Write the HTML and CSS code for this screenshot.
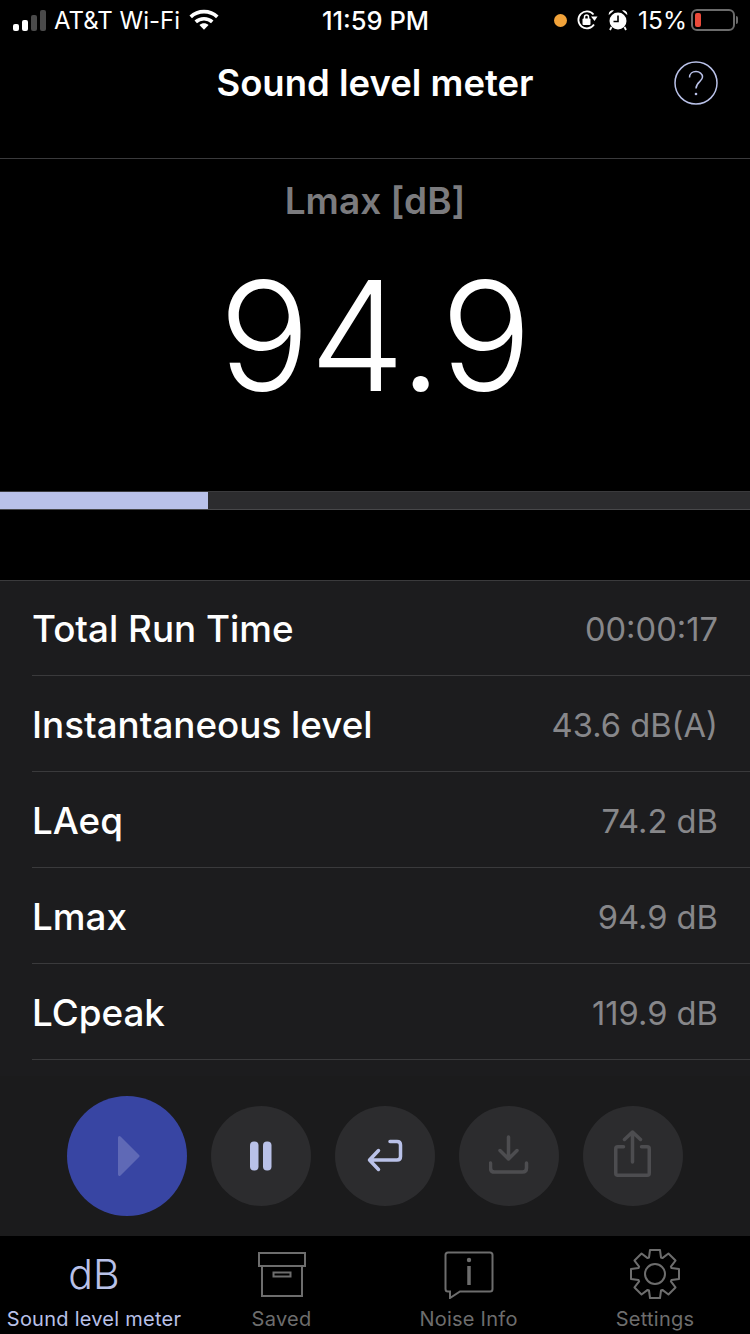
FILE: index.html
```html
<!DOCTYPE html>
<html lang="en">
<head>
    <meta charset="UTF-8">
    <meta name="viewport" content="width=device-width, initial-scale=1.0">
    <title>Sound level meter</title>
    <link rel="stylesheet" href="styles.css">
</head>
<body>
    <div class="status-bar">
        <div class="status-left">
            <div class="signal">
                <span class="on s1"></span><span class="on s2"></span><span class="s3"></span><span class="s4"></span>
            </div>
            <span class="carrier">AT&amp;T Wi-Fi</span>
            <svg class="wifi" width="30" height="22" viewBox="0 0 32 24">
                <path d="M1.5 8.5C9.5 1 22.500 1 30.500 8.500" fill="none" stroke="#fff" stroke-width="4"/>
                <path d="M7 14C12 9.500 20 9.500 25 14" fill="none" stroke="#fff" stroke-width="4"/>
                <path d="M11 17.500C14 15 18 15 21 17.500L16 22.500Z" fill="#fff"/>
            </svg>
        </div>
        <div class="clock">11:59 PM</div>
        <div class="status-right">
            <span class="mic-dot"></span>
            <svg width="22" height="22" viewBox="0 0 22 22">
                <path d="M18 15.500A8.500 8.500 0 1 1 17.500 5.500" fill="none" stroke="#fff" stroke-width="1.800"/>
                <path d="M15 7.500L21.500 7.500L18.500 12Z" fill="#fff"/>
                <rect x="6.500" y="9.500" width="8" height="6.500" rx="1" fill="#fff"/>
                <path d="M8.500 10V8a2 2 0 0 1 4 0v2" fill="none" stroke="#fff" stroke-width="1.500"/>
            </svg>
            <svg class="alarm" width="20" height="22" viewBox="0 0 20 22">
                <circle cx="10" cy="12" r="8.500" fill="#fff"/>
                <path d="M0.800 6A4 4 0 0 1 6 1.500ZM19.200 6A4 4 0 0 0 14 1.500Z" fill="#fff"/>
                <path d="M10 6.500V12.500H5.500" fill="none" stroke="#000" stroke-width="1.600"/>
                <path d="M3.500 18L2 21M16.500 18L18 21" stroke="#fff" stroke-width="1.800"/>
            </svg>
            <span class="percent">15%</span>
            <div class="battery"><span class="battery-level"></span></div>
            <span class="battery-cap"></span>
        </div>
    </div>

    <div class="nav-bar">
        <h1 class="nav-title">Sound level meter</h1>
        <svg class="help" width="44" height="44" viewBox="0 0 44 44">
            <circle cx="22" cy="22" r="21" fill="none" stroke="#b9c1e8" stroke-width="1.500"/>
            <path d="M15.500 16.500C15.500 12.500 18.500 10.500 22 10.500C25.500 10.500 28.500 12.800 28.500 16C28.500 20.500 22 21 22 27.500" fill="none" stroke="#b9c1e8" stroke-width="1.500"/>
            <circle cx="22" cy="33" r="1.300" fill="#b9c1e8"/>
        </svg>
    </div>

    <div class="meter">
        <div class="meter-label">Lmax [dB]</div>
        <div class="meter-value">94.9</div>
    </div>

    <div class="progress"><div class="progress-fill"></div></div>

    <div class="stats">
        <div class="stat-row"><span class="stat-name">Total Run Time</span><span class="stat-value">00:00:17</span></div>
        <div class="stat-row"><span class="stat-name">Instantaneous level</span><span class="stat-value">43.6 dB(A)</span></div>
        <div class="stat-row"><span class="stat-name">LAeq</span><span class="stat-value">74.2 dB</span></div>
        <div class="stat-row"><span class="stat-name">Lmax</span><span class="stat-value">94.9 dB</span></div>
        <div class="stat-row"><span class="stat-name">LCpeak</span><span class="stat-value">119.9 dB</span></div>
    </div>

    <div class="controls">
        <button class="round-btn play">
            <svg class="play-icon" width="22" height="40" viewBox="0 0 22 40">
                <path d="M1.500 1.500L20 20L1.500 38.500Z" fill="#5f69b6" stroke="#5f69b6" stroke-width="3" stroke-linejoin="round"/>
            </svg>
        </button>
        <button class="round-btn">
            <svg width="24" height="30" viewBox="0 0 24 30">
                <rect x="1" y="0.500" width="8.500" height="29" rx="4" fill="#b9c1e8"/>
                <rect x="14" y="0.500" width="8.500" height="29" rx="4" fill="#b9c1e8"/>
            </svg>
        </button>
        <button class="round-btn">
            <svg width="36" height="34" viewBox="0 0 36 34">
                <path d="M23 2.500H30Q33.500 2.500 33.500 6V17.500Q33.500 21 30 21H3M11.500 11.500L2.500 21L11.500 30.500" fill="none" stroke="#b9c1e8" stroke-width="3.500" stroke-linecap="round" stroke-linejoin="round"/>
            </svg>
        </button>
        <button class="round-btn">
            <svg width="40" height="42" viewBox="0 0 40 42">
                <path d="M19.500 2V23M11 15.500L19.500 24L28 15.500M1.500 28V33Q1.500 37 5.500 37H33.500Q37.500 37 37.500 33V28" fill="none" stroke="#4d4d50" stroke-width="3.500" stroke-linecap="round" stroke-linejoin="round"/>
            </svg>
        </button>
        <button class="round-btn">
            <svg width="38" height="52" viewBox="0 0 38 52">
                <path d="M9.500 16.750H3.750Q1.750 16.750 1.750 18.750V43.250Q1.750 45.250 3.750 45.250H33.250Q35.250 45.250 35.250 43.250V18.750Q35.250 16.750 33.250 16.750H27.500M18.500 2V32M10.500 9.500L18.500 2L26.500 9.500" fill="none" stroke="#4d4d50" stroke-width="3.500" stroke-linecap="round" stroke-linejoin="round"/>
            </svg>
        </button>
    </div>

    <div class="tab-bar">
        <div class="tab active">
            <div class="tab-icon db-mark">dB</div>
            <div class="tab-label">Sound level meter</div>
        </div>
        <div class="tab">
            <div class="tab-icon">
                <svg width="48" height="46" viewBox="0 0 48 46">
                    <path d="M1 1H47V14H1ZM4 14V44H44V14M15.500 20.500H32.500V24.500H15.500Z" fill="none" stroke="#6d6d6d" stroke-width="2"/>
                </svg>
            </div>
            <div class="tab-label">Saved</div>
        </div>
        <div class="tab">
            <div class="tab-icon tab-icon-up">
                <svg width="50" height="48" viewBox="0 0 50 48">
                    <path d="M4 1.500H46Q48.500 1.500 48.500 4V38Q48.500 40.500 46 40.500H16L6 47V40.500H4Q1.500 40.500 1.500 38V4Q1.500 1.500 4 1.500Z" fill="none" stroke="#6d6d6d" stroke-width="2"/>
                    <path d="M25 15V34" stroke="#6d6d6d" stroke-width="3.500"/>
                    <circle cx="25" cy="9" r="2.200" fill="#6d6d6d"/>
                </svg>
            </div>
            <div class="tab-label">Noise Info</div>
        </div>
        <div class="tab">
            <div class="tab-icon gear-icon">
                <svg width="50" height="50" viewBox="0 0 50 50">
                    <polygon points="19,8.500 20,1 30,1 31,8.500 32.420,9.100 38.440,4.500 45.500,11.560 40.900,17.580 41.500,19 49,20 49,30 41.500,31 40.900,32.420 45.500,38.440 38.440,45.500 32.420,40.900 31,41.500 30,49 20,49 19,41.500 17.580,40.900 11.560,45.500 4.500,38.440 9.100,32.420 8.500,31 1,30 1,20 8.500,19 9.100,17.580 4.500,11.560 11.560,4.500 17.580,9.100" fill="none" stroke="#6d6d6d" stroke-width="2" stroke-linejoin="round"/>
                    <circle cx="25" cy="25" r="10" fill="none" stroke="#6d6d6d" stroke-width="2"/>
                </svg>
            </div>
            <div class="tab-label">Settings</div>
        </div>
    </div>
</body>
</html>
```

FILE: styles.css
```css
* {
    box-sizing: border-box;
}

body {
    margin: 0;
    width: 750px;
    height: 1334px;
    overflow: hidden;
    background: #000;
    color: #fff;
    font-family: Inter, 'Liberation Sans', sans-serif;
}

/* Status bar */
.status-bar {
    height: 40px;
    padding: 0 12px 0 13px;
    display: grid;
    grid-template-columns: 1fr auto 1fr;
    align-items: center;
    font-size: 24px;
}

.status-left {
    display: flex;
    align-items: center;
}

.signal {
    display: flex;
    align-items: flex-end;
    gap: 3px;
    height: 21px;
    margin-right: 8px;
}

.signal span {
    width: 6px;
    background: #4a4a4a;
    border-radius: 2px;
}

.signal .on {
    background: #fff;
}

.s1 { height: 7px; }
.s2 { height: 11px; }
.s3 { height: 16px; }
.s4 { height: 21px; }

.carrier {
    margin-right: 9px;
}

.clock {
    font-size: 25.5px;
    font-weight: 500;
}

.status-right {
    display: flex;
    align-items: center;
    justify-content: flex-end;
}

.mic-dot {
    width: 13px;
    height: 13px;
    border-radius: 50%;
    background: #f2a33a;
    margin-right: 9px;
}

.alarm {
    margin: 0 10px 0 10px;
}

.percent {
    font-size: 24.500px;
    margin-right: 4px;
}

.battery {
    width: 44px;
    height: 22px;
    border: 2px solid #6b6b6b;
    border-radius: 6px;
    padding: 2px;
}

.battery-level {
    display: block;
    width: 6px;
    height: 100%;
    background: #eb4a3a;
    border-radius: 2px;
}

.battery-cap {
    width: 2px;
    height: 8px;
    margin-left: 1px;
    background: #6b6b6b;
    border-radius: 0 2px 2px 0;
}

/* Nav */
.nav-bar {
    position: relative;
    height: 119px;
    border-bottom: 1px solid #3a3a3c;
    display: flex;
    justify-content: center;
    padding-top: 21px;
}

.nav-title {
    margin: 0;
    font-size: 36.500px;
    line-height: 44px;
    font-weight: 600;
}

.help {
    position: absolute;
    top: 21px;
    right: 32px;
}

/* Meter */
.meter {
    height: 332px;
    text-align: center;
}

.meter-label {
    padding-top: 20px;
    font-size: 37px;
    line-height: 44px;
    font-weight: 600;
    color: #7b7b7e;
}

.meter-value {
    margin-top: 21px;
    font-size: 152px;
    line-height: 184px;
    font-weight: 300;
    letter-spacing: -0.700px;
}

.progress {
    height: 19px;
    background: #2c2c2e;
    border-top: 1px solid #3a3a3c;
    border-bottom: 1px solid #48484a;
}

.progress-fill {
    width: 208px;
    height: 100%;
    background: #b9c1e8;
}

/* Stats list */
.stats {
    margin-top: 70px;
    height: 496px;
    background: #1c1c1e;
    border-top: 1px solid #3a3a3c;
}

.stat-row {
    height: 96px;
    margin-left: 32px;
    padding: 2px 32px 0 0;
    border-bottom: 1px solid #3a3a3c;
    display: flex;
    align-items: center;
    justify-content: space-between;
}

.stat-row:first-child {
    height: 95px;
    padding-top: 0;
}

.stat-name {
    font-size: 36.800px;
    font-weight: 500;
}

.stat-value {
    font-size: 32.700px;
    color: #87878a;
    padding-top: 1px;
}

/* Controls */
.controls {
    height: 160px;
    background: #1b1b1c;
    display: flex;
    align-items: center;
    gap: 24px;
    padding-left: 67px;
}

.round-btn {
    width: 100px;
    height: 100px;
    margin: 0;
    padding: 0;
    border: 0;
    border-radius: 50%;
    background: #2c2c2e;
    display: flex;
    align-items: center;
    justify-content: center;
}

.round-btn.play {
    width: 120px;
    height: 120px;
    background: #3845a3;
}

.play-icon {
    margin-left: 4px;
}

/* Tab bar */
.tab-bar {
    height: 98px;
    background: #000;
    display: grid;
    grid-template-columns: 188px 187px 187px 186px;
}

.tab {
    text-align: center;
    color: #6d6d6d;
}

.tab.active {
    color: #b9c1e8;
}

.tab-icon {
    height: 70px;
    padding-top: 16px;
    display: flex;
    justify-content: center;
}

.tab-icon-up {
    padding-top: 15px;
}

.gear-icon {
    padding-top: 13px;
}

.db-mark {
    padding-top: 13px;
    font-size: 41px;
    line-height: 50px;
    font-weight: 300;
}

.tab-label {
    font-size: 20px;
    line-height: 26px;
    letter-spacing: 0.250px;
    white-space: nowrap;
}
```
